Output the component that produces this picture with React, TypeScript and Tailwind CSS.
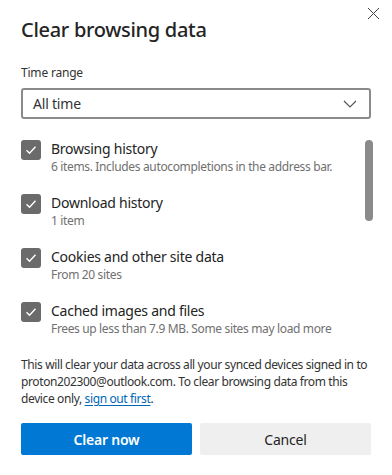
import React from "react";

const items = [
  { title: "Browsing history", sub: "6 items. Includes autocompletions in the address bar." },
  { title: "Download history", sub: "1 item" },
  { title: "Cookies and other site data", sub: "From 20 sites" },
  { title: "Cached images and files", sub: "Frees up less than 7.9 MB. Some sites may load more" },
];

function Check() {
  return (
    <div className="w-5 h-5 rounded-[3px] bg-[#6b6b6b] flex items-center justify-center shrink-0">
      <svg width="12" height="12" viewBox="0 0 12 12" fill="none">
        <path d="M1.5 6.3 L4.5 9.2 L10.5 2.8" stroke="white" strokeWidth="1.4" />
      </svg>
    </div>
  );
}

export default function App() {
  return (
    <div
      className="w-[392px] h-[475px] bg-white relative overflow-hidden text-[#1f1f1f]"
      style={{ fontFamily: '"Segoe UI", "Noto Sans", sans-serif' }}
    >
      <button className="absolute right-[12px] top-[6px] w-[14px] h-[14px] flex items-center justify-center">
        <svg width="13" height="13" viewBox="0 0 13 13">
          <path d="M1 1 L12 12 M12 1 L1 12" stroke="#444" strokeWidth="1" />
        </svg>
      </button>
      <div className="pl-[21px] pr-[21px] pt-[16px] flex flex-col">
        <h1 className="text-[20px] leading-[28px] font-medium tracking-[-0.3px] text-[#242424]">Clear browsing data</h1>
        <div className="mt-[21px] text-[12px] leading-[16px] tracking-[-0.2px] text-[#333]">Time range</div>
        <div className="mt-[7px] h-[31px] border-2 border-[#8a8a8a] rounded-[3px] flex items-center justify-between pl-[10px] pr-[12px]">
          <span className="text-[14px] tracking-[-0.2px] text-[#333]">All time</span>
          <svg width="14" height="8" viewBox="0 0 14 8">
            <path d="M1 1 L7 7 L13 1" stroke="#555" strokeWidth="1.2" fill="none" />
          </svg>
        </div>
        <div className="relative mt-[21px] h-[210px]">
          <div className="flex flex-col gap-[34px] pr-[20px]">
            {items.map((it) => (
              <div key={it.title} className="flex items-start gap-[10px] h-[20px]">
                <Check />
                <div className="flex flex-col -mt-[1px]">
                  <div className="text-[14px] leading-[20px] tracking-[-0.25px] text-[#242424]">{it.title}</div>
                  <div className="text-[12px] leading-[16px] tracking-[-0.35px] text-[#707070] whitespace-nowrap">{it.sub}</div>
                </div>
              </div>
            ))}
          </div>
          <div className="absolute right-[-2px] top-[0px] w-[8px] h-[81px] rounded-full bg-[#8a8a8a]" />
        </div>
        <p className="mt-[6px] -mr-[4px] text-[12px] leading-[17px] tracking-[-0.38px] text-[#333]">
          This will clear your data across all your synced devices signed in to proton202300@outlook.com. To clear browsing data from this device only,{" "}
          <a className="text-[#0067b8] underline underline-offset-2">sign out first</a>.
        </p>
        <div className="mt-[16px] flex gap-[8px]">
          <button className="flex-1 h-[32px] rounded-[2px] bg-[#0078d4] text-white text-[14px] font-semibold tracking-[-0.2px]">Clear now</button>
          <button className="flex-1 h-[32px] rounded-[2px] bg-[#efefef] text-[#242424] text-[14px] tracking-[-0.2px]">Cancel</button>
        </div>
      </div>
    </div>
  );
}
